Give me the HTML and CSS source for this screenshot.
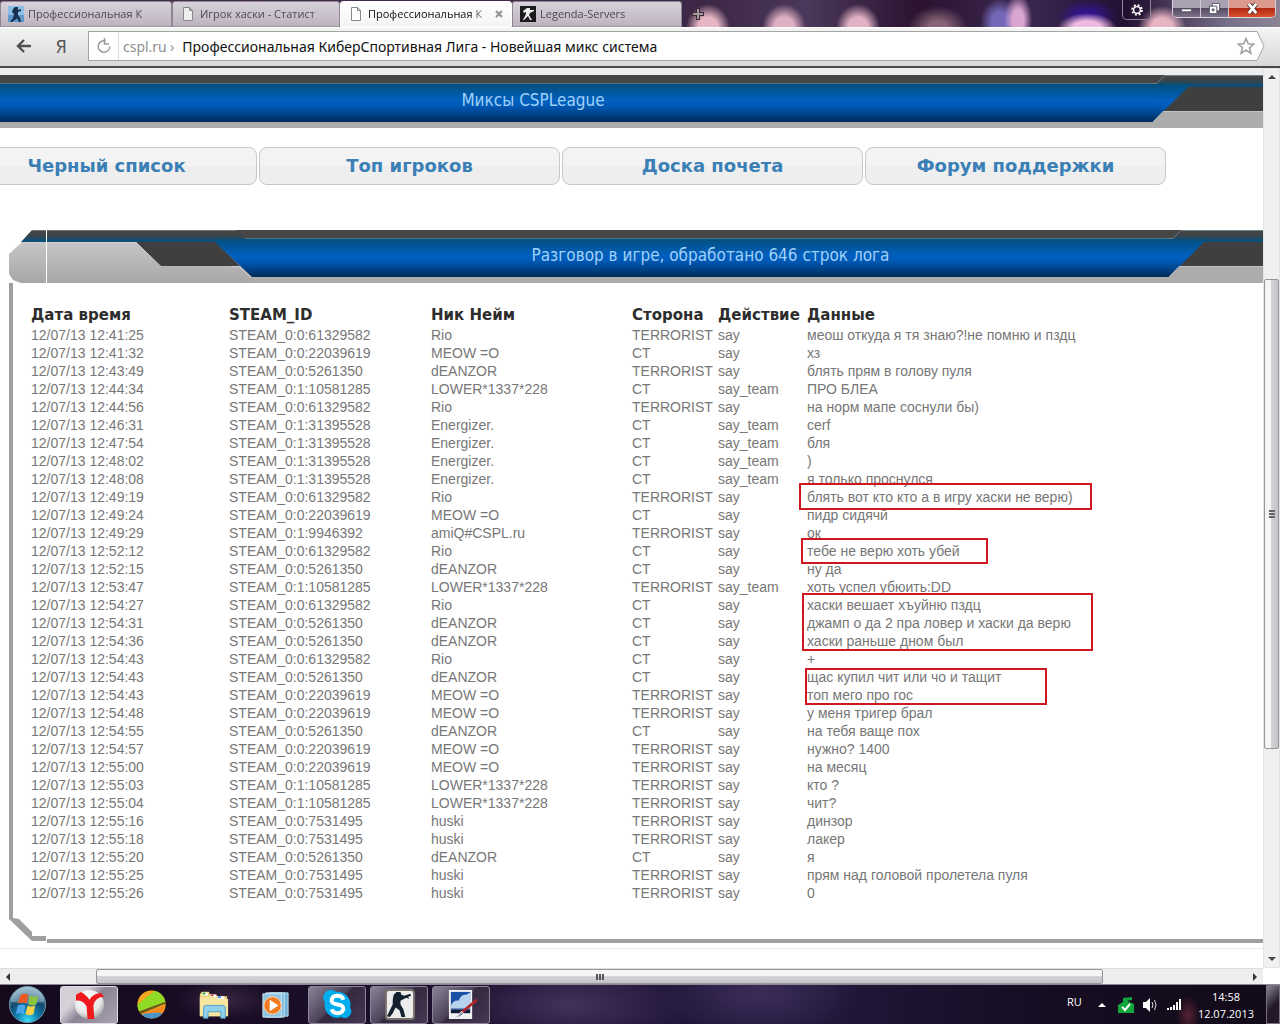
FILE: index.html
```html
<!DOCTYPE html>
<html lang="ru">
<head>
<meta charset="utf-8">
<title>Профессиональная КиберСпортивная Лига</title>
<link rel="stylesheet" href="styles.css">
</head>
<body>
<header class="titlebar">
  <nav class="tabs">
    <a class="tab" href="#"><svg class="fav" viewBox="0 0 16 16"><rect width="16" height="16" fill="#8dbfe6"/><path d="M0 9h16v7H0z" fill="#5e98cc"/><path d="M7 1h3v3l3-1v2l-3 1v3l2 3 1 4h-2l-2-4-2 2-3 2H2l3-4 1-4-2-2 1-3z" fill="#173250"/></svg><span class="tab-text">Профессиональная К</span></a>
    <a class="tab" href="#"><svg class="fav" viewBox="0 0 16 16"><path d="M3.500 1.500h6l3 3v10h-9zM9.500 1.500v3h3" fill="#eee" stroke="#888"/></svg><span class="tab-text">Игрок хаски - Статист</span></a>
    <a class="tab active" href="#"><svg class="fav" viewBox="0 0 16 16"><path d="M3.500 1.500h6l3 3v10h-9zM9.500 1.500v3h3" fill="#fff" stroke="#888"/></svg><span class="tab-text">Профессиональная К</span><svg class="close" viewBox="0 0 8 8"><path d="M1 1l6 6M7 1L1 7" stroke="#909090" stroke-width="2"/></svg></a>
    <a class="tab" href="#"><svg class="fav" viewBox="0 0 16 16"><rect width="16" height="16" fill="#1d1a1d"/><path d="M7 2h3v2l4 0v1l-4 2-1 2 3 5h-2L8 10l-4 4H3l3-6V6L4 7 3 5z" fill="#eee"/></svg><span class="tab-text">Legenda-Servers</span></a>
  </nav>
  <button class="plus" aria-label="Новая вкладка"><svg viewBox="0 0 12 12"><path d="M6 0v12M0 6h12" stroke="#3b2838" stroke-width="4"/><path d="M6 1v10M1 6h10" stroke="#a8969e" stroke-width="2"/></svg></button>
  <button class="gear" aria-label="Настройки"><svg viewBox="0 0 16 16"><circle cx="8" cy="8" r="5.500" fill="none" stroke="#fff" stroke-width="2.400" stroke-dasharray="2.160 2.160"/><circle cx="8" cy="8" r="3.800" fill="none" stroke="#fff" stroke-width="1.600"/></svg></button>
  <div class="win">
    <button class="w-min" aria-label="Свернуть"><svg viewBox="0 0 14 14"><path d="M1.500 7.500h11v3h-11z" fill="#fff" stroke="#556"/></svg></button>
    <button class="w-max" aria-label="Развернуть"><svg viewBox="0 0 14 14"><path d="M4.500 1.500h8v8h-8z" fill="#fff" stroke="#556"/><path d="M1.500 4.500h8v8h-8z" fill="#fff" stroke="#556"/><path d="M4.500 7.500h2v2h-2z" fill="#889" stroke="#556"/></svg></button>
    <button class="w-close" aria-label="Закрыть"><svg viewBox="0 0 14 14"><path d="M3 2l8 10M11 2L3 12" stroke="#533" stroke-width="5"/><path d="M3 2l8 10M11 2L3 12" stroke="#fff" stroke-width="3"/></svg></button>
  </div>
</header>

<div class="toolbar">
  <button class="back" aria-label="Назад"><svg viewBox="0 0 16 14"><path d="M15 7H2M8 1L2 7l6 6" fill="none" stroke="#505050" stroke-width="2.400"/></svg></button>
  <button class="ya">Я</button>
  <div class="address">
    <svg class="addr-bg" viewBox="0 0 10 30" preserveAspectRatio="none"><path d="M0 .5h2l7 14.500-7 14.500H0z" fill="#fff"/><path d="M0 .5h2l7 14.500-7 14.500H0" fill="none" stroke="#a5a5a5"/></svg>
    <button class="reload" aria-label="Обновить"><svg viewBox="0 0 16 16"><path d="M13.800 8.500a5.800 5.800 0 1 1-4.300-5.600" fill="none" stroke="#999" stroke-width="1.500"/><path d="M8.500 0v6h4.500" fill="none" stroke="#999" stroke-width="1.500"/></svg></button>
    <label class="host" for="url">cspl.ru ›</label>
    <input id="url" value="Профессиональная КиберСпортивная Лига - Новейшая микс система">
    <svg class="star" viewBox="0 0 18 18"><path d="M9 1.500l2.200 5.200 5.600.4-4.300 3.600 1.400 5.500L9 13.200l-4.900 3 1.400-5.500L1.200 7.100l5.600-.4z" fill="none" stroke="#a0a0a0" stroke-width="1.600"/></svg>
  </div>
</div>

<div class="viewport">
  <main class="page">
    <div class="bar bar-top">
      <h2 class="bar-mid">Миксы CSPLeague</h2>
      <svg class="bar-right" viewBox="0 0 110 53" preserveAspectRatio="xMinYMin slice"><use href="#rightcap"/></svg>
    </div>
    <nav class="menu">
      <a href="#">Черный список</a><a href="#">Топ игроков</a><a href="#">Доска почета</a><a href="#">Форум поддержки</a>
    </nav>
    <section class="panel">
      <div class="bar">
        <svg class="bar-left" viewBox="0 0 243 53">
          <defs>
            <linearGradient id="blue" x1="0" y1="9" x2="0" y2="47" gradientUnits="userSpaceOnUse"><stop offset="0" stop-color="#044f7c"/><stop offset=".45" stop-color="#0060c0"/><stop offset=".6" stop-color="#0058b4"/><stop offset="1" stop-color="#012b59"/></linearGradient>
            <linearGradient id="grey" x1="0" y1="12" x2="0" y2="53" gradientUnits="userSpaceOnUse"><stop offset="0" stop-color="#c6c6c6"/><stop offset="1" stop-color="#a7a7a7"/></linearGradient>
            <linearGradient id="lid" x1="0" y1="0" x2="0" y2="12" gradientUnits="userSpaceOnUse"><stop offset="0" stop-color="#454545"/><stop offset=".4" stop-color="#3e4346"/><stop offset="1" stop-color="#05507f"/></linearGradient>
            <g id="rightcap"><path d="M0 0h110v12H0z" fill="url(#lid)"/><path d="M35 12h75v24H0z" fill="#3f3f3f"/><path d="M0 36h110v17H0z" fill="#acacac"/><path d="M0 9h38L0 47z" fill="url(#blue)"/><path d="M0 0h12L4 8H0z" fill="#464646"/><path d="M0 8.500h4L12 .5h98" fill="none" stroke="#708088"/><path d="M0 47l10-10.500h100" fill="none" stroke="#c4c4c4"/></g>
          </defs>
          <path d="M13 12L0 24v20l4 6 8 3h231V12z" fill="url(#grey)"/>
          <path d="M23 0h220v12H12z" fill="url(#lid)"/>
          <path d="M23 .5h205" stroke="#707274"/>
          <path d="M127 12h80l24 24h-80z" fill="#3f3f3f"/>
          <path d="M206 12l5-3h32v38z" fill="url(#blue)"/>
          <path d="M227 0h16v9h-7z" fill="#464646"/>
          <path d="M236 8.500h7" stroke="#477488"/>
          <path d="M12 12.500h115l25 24M222 36.500h8l12 11" fill="none" stroke="#cfcfcf"/>
          <path d="M37.500 0v53" stroke="#fff"/>
        </svg>
        <h2 class="bar-mid">Разговор в игре, обработано 646 строк лога</h2>
        <svg class="bar-right bar-right-short" viewBox="0 0 110 53" preserveAspectRatio="xMinYMin slice"><use href="#rightcap"/></svg>
      </div>
      <div class="panel-body">
        <div class="log-wrap">
        <table class="log">
          <colgroup><col class="c-date"><col class="c-steam"><col class="c-nick"><col class="c-side"><col class="c-act"><col></colgroup>
          <thead><tr><th>Дата время</th><th>STEAM_ID</th><th>Ник Нейм</th><th>Сторона</th><th>Действие</th><th>Данные</th></tr></thead>
          <tbody>
          <tr><td>12/07/13 12:41:25</td><td>STEAM_0:0:61329582</td><td>Rio</td><td>TERRORIST</td><td>say</td><td>меош откуда я тя знаю?!не помню и пздц</td></tr>
          <tr><td>12/07/13 12:41:32</td><td>STEAM_0:0:22039619</td><td>MEOW =O</td><td>CT</td><td>say</td><td>хз</td></tr>
          <tr><td>12/07/13 12:43:49</td><td>STEAM_0:0:5261350</td><td>dEANZOR</td><td>TERRORIST</td><td>say</td><td>блять прям в голову пуля</td></tr>
          <tr><td>12/07/13 12:44:34</td><td>STEAM_0:1:10581285</td><td>LOWER*1337*228</td><td>CT</td><td>say_team</td><td>ПРО БЛЕА</td></tr>
          <tr><td>12/07/13 12:44:56</td><td>STEAM_0:0:61329582</td><td>Rio</td><td>TERRORIST</td><td>say</td><td>на норм мапе соснули бы)</td></tr>
          <tr><td>12/07/13 12:46:31</td><td>STEAM_0:1:31395528</td><td>Energizer.</td><td>CT</td><td>say_team</td><td>cerf</td></tr>
          <tr><td>12/07/13 12:47:54</td><td>STEAM_0:1:31395528</td><td>Energizer.</td><td>CT</td><td>say_team</td><td>бля</td></tr>
          <tr><td>12/07/13 12:48:02</td><td>STEAM_0:1:31395528</td><td>Energizer.</td><td>CT</td><td>say_team</td><td>)</td></tr>
          <tr><td>12/07/13 12:48:08</td><td>STEAM_0:1:31395528</td><td>Energizer.</td><td>CT</td><td>say_team</td><td>я только проснулся</td></tr>
          <tr><td>12/07/13 12:49:19</td><td>STEAM_0:0:61329582</td><td>Rio</td><td>TERRORIST</td><td>say</td><td>блять вот кто кто а в игру хаски не верю)</td></tr>
          <tr><td>12/07/13 12:49:24</td><td>STEAM_0:0:22039619</td><td>MEOW =O</td><td>CT</td><td>say</td><td>пидр сидячй</td></tr>
          <tr><td>12/07/13 12:49:29</td><td>STEAM_0:1:9946392</td><td>amiQ#CSPL.ru</td><td>TERRORIST</td><td>say</td><td>ок</td></tr>
          <tr><td>12/07/13 12:52:12</td><td>STEAM_0:0:61329582</td><td>Rio</td><td>CT</td><td>say</td><td>тебе не верю хоть убей</td></tr>
          <tr><td>12/07/13 12:52:15</td><td>STEAM_0:0:5261350</td><td>dEANZOR</td><td>CT</td><td>say</td><td>ну да</td></tr>
          <tr><td>12/07/13 12:53:47</td><td>STEAM_0:1:10581285</td><td>LOWER*1337*228</td><td>TERRORIST</td><td>say_team</td><td>хоть успел убюить:DD</td></tr>
          <tr><td>12/07/13 12:54:27</td><td>STEAM_0:0:61329582</td><td>Rio</td><td>CT</td><td>say</td><td>хаски вешает хъуйню пздц</td></tr>
          <tr><td>12/07/13 12:54:31</td><td>STEAM_0:0:5261350</td><td>dEANZOR</td><td>CT</td><td>say</td><td>джамп о да 2 пра ловер и хаски да верю</td></tr>
          <tr><td>12/07/13 12:54:36</td><td>STEAM_0:0:5261350</td><td>dEANZOR</td><td>CT</td><td>say</td><td>хаски раньше дном был</td></tr>
          <tr><td>12/07/13 12:54:43</td><td>STEAM_0:0:61329582</td><td>Rio</td><td>CT</td><td>say</td><td>+</td></tr>
          <tr><td>12/07/13 12:54:43</td><td>STEAM_0:0:5261350</td><td>dEANZOR</td><td>CT</td><td>say</td><td>щас купил чит или чо и тащит</td></tr>
          <tr><td>12/07/13 12:54:43</td><td>STEAM_0:0:22039619</td><td>MEOW =O</td><td>TERRORIST</td><td>say</td><td>топ мего про гос</td></tr>
          <tr><td>12/07/13 12:54:48</td><td>STEAM_0:0:22039619</td><td>MEOW =O</td><td>TERRORIST</td><td>say</td><td>у меня тригер брал</td></tr>
          <tr><td>12/07/13 12:54:55</td><td>STEAM_0:0:5261350</td><td>dEANZOR</td><td>CT</td><td>say</td><td>на тебя ваще пох</td></tr>
          <tr><td>12/07/13 12:54:57</td><td>STEAM_0:0:22039619</td><td>MEOW =O</td><td>TERRORIST</td><td>say</td><td>нужно? 1400</td></tr>
          <tr><td>12/07/13 12:55:00</td><td>STEAM_0:0:22039619</td><td>MEOW =O</td><td>TERRORIST</td><td>say</td><td>на месяц</td></tr>
          <tr><td>12/07/13 12:55:03</td><td>STEAM_0:1:10581285</td><td>LOWER*1337*228</td><td>TERRORIST</td><td>say</td><td>кто ?</td></tr>
          <tr><td>12/07/13 12:55:04</td><td>STEAM_0:1:10581285</td><td>LOWER*1337*228</td><td>TERRORIST</td><td>say</td><td>чит?</td></tr>
          <tr><td>12/07/13 12:55:16</td><td>STEAM_0:0:7531495</td><td>huski</td><td>TERRORIST</td><td>say</td><td>динзор</td></tr>
          <tr><td>12/07/13 12:55:18</td><td>STEAM_0:0:7531495</td><td>huski</td><td>TERRORIST</td><td>say</td><td>лакер</td></tr>
          <tr><td>12/07/13 12:55:20</td><td>STEAM_0:0:5261350</td><td>dEANZOR</td><td>CT</td><td>say</td><td>я</td></tr>
          <tr><td>12/07/13 12:55:25</td><td>STEAM_0:0:7531495</td><td>huski</td><td>TERRORIST</td><td>say</td><td>прям над головой пролетела пуля</td></tr>
          <tr><td>12/07/13 12:55:26</td><td>STEAM_0:0:7531495</td><td>huski</td><td>TERRORIST</td><td>say</td><td>0</td></tr>
          </tbody>
        </table>
        <div class="mark mark-a"></div><div class="mark mark-b"></div><div class="mark mark-c"></div><div class="mark mark-d"></div>
        </div>
      </div>
      <div class="panel-foot">
        <svg class="corner" viewBox="0 0 38 25"><path d="M0 0h4l6 1 13 13v4h14v5H23L0 1z" fill="#9f9f9f"/></svg>
        <div class="foot-line"></div>
      </div>
    </section>
    <hr class="page-end">
  </main>
  <div class="vscroll"><svg viewBox="0 0 8 4"><path d="M0 4l4-4 4 4z" fill="#444"/></svg><div class="vthumb"><i></i><i></i><i></i></div><svg viewBox="0 0 8 4"><path d="M0 0l4 4 4-4z" fill="#444"/></svg></div>
  <div class="hscroll"><svg viewBox="0 0 4 8"><path d="M4 0L0 4l4 4z" fill="#333"/></svg><div class="hthumb"><i></i><i></i><i></i></div><svg viewBox="0 0 4 8"><path d="M0 0l4 4-4 4z" fill="#333"/></svg></div>
</div>

<footer class="taskbar">
  <button class="start" aria-label="Пуск"><svg viewBox="0 0 40 40"><defs><radialGradient id="orb" cx=".5" cy=".95" r=".9"><stop offset="0" stop-color="#3de0ff"/><stop offset=".35" stop-color="#0f7fae"/><stop offset=".65" stop-color="#14496c"/><stop offset="1" stop-color="#7fa7ba"/></radialGradient></defs><circle cx="20" cy="20" r="18.500" fill="url(#orb)" stroke="#6f9db2"/><path d="M3 17a17 15 0 0 1 34 0q-17 4-34 0z" fill="#cfe4ef" opacity=".4"/><path d="M13 10q4-2 8 0l-2 9q-4-2-9 0z" fill="#ea5b24"/><path d="M22 11q5 2 9 0l-2 9q-4 2-8 0z" fill="#8cc63e"/><path d="M10 21q4-2 8 0l-2 9q-4-2-8 0z" fill="#48a7e8"/><path d="M20 21q4 2 8 0l-2 9q-4 2-8 0z" fill="#fbd148"/></svg></button>
  <button class="task on" aria-label="Яндекс"><svg viewBox="0 0 32 32"><defs><radialGradient id="ball" cx=".4" cy=".3" r=".7"><stop offset="0" stop-color="#fff"/><stop offset=".7" stop-color="#e8e8ea"/><stop offset="1" stop-color="#aaa"/></radialGradient></defs><circle cx="16" cy="16" r="15" fill="url(#ball)"/><path d="M2 6l5-3q6 3 9 8 4-7 12-7l3 4q-9 0-11 9l1 14h-7l-1-13Q9 11 2 12z" fill="#ef1a1e"/></svg></button>
  <button class="task" aria-label="Браузер"><svg viewBox="0 0 32 32"><defs><clipPath id="ballclip"><circle cx="16" cy="16" r="14.500"/></clipPath></defs><g clip-path="url(#ballclip)"><path d="M0 0h32v32H0z" fill="#f7a61f"/><path d="M0 17L22 0h10v13L0 24z" fill="#8edc25"/><path d="M1 24l30-11v2L4 26z" fill="#6b5a18"/><path d="M8 25l24-9v8l-20 5z" fill="#f08a1c"/><path d="M0 28q16-6 32-2v6H0z" fill="#4a94c8"/></g></svg></button>
  <button class="task" aria-label="Проводник"><svg viewBox="0 0 34 32"><path d="M2 5l2-3h8l1 3h7l1 2h11v22H2z" fill="#ecd078"/><path d="M4 3h7v3H4zM13 5h7v3h-7zM21 7h8v3h-8z" fill="#fff"/><path d="M5 3h3v2H5z" fill="#1aa53a"/><path d="M14 5h3v2h-3z" fill="#d6452a"/><path d="M22 7h3v2h-3z" fill="#2f7fd6"/><path d="M2 8h17l2 2h12v19H2z" fill="#f6e6a0"/><path d="M6 31V20q0-3 3-3h18q3 0 3 3v11h-5v-7H11v7z" fill="#8fd0ea" stroke="#4f9cc4"/></svg></button>
  <button class="task" aria-label="Проигрыватель"><svg viewBox="0 0 32 32"><path d="M10 4h19v24H10z" fill="#6fb0d4" stroke="#b9def0"/><path d="M6 4h19v25H6z" fill="#7fbadb" stroke="#c9e6f4"/><path d="M3 5h19v24H3z" fill="#8cc3e0" stroke="#cfe8f5"/><circle cx="13" cy="17" r="9" fill="#f07a22" stroke="#ffd9b5"/><path d="M10 11l9 6-9 6z" fill="#fff"/></svg></button>
  <button class="task open" aria-label="Skype"><svg viewBox="0 0 32 32"><path d="M9 1q4 0 6 2a13 13 0 0 1 14 16q2 3 1 6a7 7 0 0 1-10 4A13 13 0 0 1 3 14 8 8 0 0 1 9 1z" fill="#00aeef"/><path d="M22 11q-1-4-6-4t-6 4 6 5 6 5-6 4-6-4" fill="none" stroke="#fff" stroke-width="4"/></svg></button>
  <button class="task open" aria-label="Counter-Strike"><svg viewBox="0 0 32 32"><rect x="2" y="1" width="29" height="30" rx="3" fill="#ececec" stroke="#77706c" stroke-width="2"/><path d="M13 3h4l1 3 3 1 6-2 1 2-3 1 1 2-3-1-4 2-2 1v4l3 5 2 8h-4l-2-7-4-3-3 6-3 4-3-1 3-6 3-6v-5l1-5z" fill="#14202e"/></svg></button>
  <button class="task open" aria-label="Paint"><svg viewBox="0 0 32 32"><path d="M3 1h24v30H3z" fill="#f1f1f4"/><path d="M5 3h20v18H5z" fill="#1a4fa6"/><path d="M5 17q3-6 8-5 3-7 8-6 4-3 4-1v15H5z" fill="#b7d2ee"/><path d="M5 21h20v4H5z" fill="#0d1c3c"/><path d="M31 10l2 2-17 14-3-1z" fill="#b3262b"/><path d="M16 23l2 2q-3 5-9 4 4-1 7-6z" fill="#889" stroke="#eee"/></svg></button>
  <div class="tray">
    <span class="lang">RU</span>
    <svg class="t-arrow" viewBox="0 0 8 4"><path d="M0 4l4-4 4 4z" fill="#fff"/></svg>
    <svg class="t-ic" viewBox="0 0 16 16"><path d="M0 8l5-3V1l9-1v3L9 4l7 3v9H0z" fill="#12a63c"/><path d="M4 10l3 3 5-6" fill="none" stroke="#fff" stroke-width="2"/></svg>
    <svg class="t-ic" viewBox="0 0 16 16"><path d="M1 5h3l4-4v14l-4-4H1z" fill="#fff"/><path d="M10 5q2 3 0 6M12.500 3q3 5 0 10" fill="none" stroke="#ddd"/></svg>
    <svg class="t-ic t-sig" viewBox="0 0 16 16"><path d="M1 11h2v2H1zM4 10h2v3H4zM7 8h2v5H7zM10 5h2v8h-2zM13 2h2v11h-2z" fill="#fff"/></svg>
    <time class="clock"><span>14:58</span><span>12.07.2013</span></time>
    <button class="peek" aria-label="Рабочий стол"></button>
  </div>
</footer>
</body>
</html>
```
FILE: styles.css
```css
* { box-sizing: border-box; }
body { margin: 0; min-height: 100vh; display: flex; flex-direction: column; background: #fff; font-family: "Open Sans", "Noto Sans", sans-serif; font-size: 11px; overflow-x: hidden; }
button { border: 0; padding: 0; background: none; font: inherit; display: flex; align-items: center; justify-content: center; }
svg { display: block; flex: none; }
a { text-decoration: none; }

.titlebar {
  height: 27px; display: flex; align-items: flex-start; padding-right: 4px;
  background:
    radial-gradient(ellipse 22px 24px at 708px 28px, #e6b6c4 45%, transparent),
    radial-gradient(ellipse 22px 24px at 784px 28px, #dfb0c2 45%, transparent),
    radial-gradient(ellipse 22px 24px at 858px 28px, #e2b2c4 45%, transparent),
    radial-gradient(ellipse 30px 22px at 938px 28px, #876476 30%, transparent),
    radial-gradient(ellipse 14px 26px at 1018px 20px, #dba6d2 40%, transparent),
    radial-gradient(ellipse 20px 24px at 1000px 22px, #7468b8 40%, transparent),
    radial-gradient(ellipse 30px 16px at 1087px 29px, #efbadf 50%, transparent),
    radial-gradient(ellipse 30px 16px at 1087px 16px, #32148a 30%, transparent),
    radial-gradient(ellipse 24px 22px at 1162px 28px, #e8b4c2 45%, transparent),
    linear-gradient(90deg, #45304c 0, #3d2746 55%, #4b385a 63%, #2a1230 72%, #3c2850 80%, #241033 88%, #77708a 96%, #8c8494 100%);
}
.tabs { display: flex; height: 27px; padding-top: 1px; }
.tab { width: 170px; display: flex; align-items: center; gap: 4px; padding: 0 8px 1px 7px; color: #4f4852; background: linear-gradient(#d8d2da, #bcb3be); border: 1px solid #8d8592; border-bottom-color: #999; border-radius: 3px 3px 0 0; }
.tab:nth-child(odd) { width: 172px; }
.tab:nth-child(2) { width: 168px; }
.tab.active { color: #111; background: linear-gradient(#fff, #f4f4f4); border-color: #fff; }
.fav { width: 16px; height: 16px; }
.tab-text { flex: 1; min-width: 0; white-space: nowrap; -webkit-mask-image: linear-gradient(90deg, #000 84%, transparent); mask-image: linear-gradient(90deg, #000 84%, transparent); }
.close { width: 8px; height: 8px; }
.plus { margin: 8px auto 0 10px; }
.plus svg { width: 12px; height: 12px; }
.gear { width: 29px; height: 20px; border: 1px solid #8f8496; border-top: 0; border-radius: 0 0 5px 5px; background: rgba(30, 15, 40, .35); margin-right: 21px; }
.gear svg { width: 14px; height: 14px; }
.win { display: flex; height: 18px; border: 1px solid #ddd3e0; border-top: 0; border-radius: 0 0 5px 5px; overflow: hidden; }
.win svg { width: 13px; height: 13px; }
.w-min, .w-max { width: 28px; border-right: 1px solid #d0c8d4; background: linear-gradient(#a9a0b2 45%, #554a62 50%, #7c738a); }
.w-close { width: 46px; background: linear-gradient(#dc9a8c 45%, #b52a12 50%, #d8512c); }

.toolbar { height: 41px; display: flex; align-items: center; padding: 0 16px 2px; background: linear-gradient(#f4f4f4, #d8d8d8); border-top: 1px solid #fff; border-bottom: 2px solid #484848; }
.back svg { width: 16px; height: 14px; }
.ya { margin-left: 23px; width: 12px; color: #555; font: 18px "DejaVu Sans Condensed", "DejaVu Sans", sans-serif; }
.address { position: relative; flex: 1; height: 30px; margin-left: 21px; margin-right: 9px; display: flex; align-items: center; background: #fff; border: 1px solid #a5a5a5; border-right: 0; }
.addr-bg { position: absolute; left: 100%; top: -1px; width: 10px; height: 30px; }
.reload { width: 30px; height: 28px; border-right: 1px solid #ddd; }
.reload svg { width: 16px; height: 16px; }
.host { color: #888; font-size: 14px; padding: 0 8px 0 4px; }
.address input { flex: 1; min-width: 0; border: 0; padding: 0; background: none; color: #111; font: 14px "Noto Sans", "Open Sans", sans-serif; }
.star { width: 18px; height: 18px; }

.viewport { flex: 1; display: grid; grid-template-columns: minmax(0, 1fr) 17px; grid-template-rows: 1fr 16px; }
.page { overflow: hidden; background: #fff; border-top: 7px solid #eee; }
.bar { display: flex; height: 53px; overflow: hidden; }
.bar-top { margin-left: -87px; }
.bar-left { width: 243px; height: 53px; }
.bar-mid { flex: 1; margin: 0; height: 53px; border-top: 8px solid #464646; border-bottom: 6px solid #acacac; background: linear-gradient(#477488 1px, #044f7c 1px, #0060c0 45%, #0058b4 60%, #012b59); color: #9fd0f7; font: 17px/34px "DejaVu Sans Condensed", "DejaVu Sans", sans-serif; font-stretch: condensed; text-align: center; white-space: nowrap; }
.bar-right { width: 110px; height: 53px; }
.bar-right-short { width: 94px; }
.menu { display: flex; gap: 2px; margin: 19px 97px 0 -44px; }
.menu a { flex: 1; height: 38px; border: 1px solid #c8c8c8; border-radius: 8px; background: linear-gradient(#f3f3f3 50%, #eee 50%); color: #3a7fb5; font: bold 18px/36px "DejaVu Sans", sans-serif; text-align: center; white-space: nowrap; }
.panel { margin: 45px 0 0 9px; }
.panel-body { border-left: 4px solid #9f9f9f; padding: 21px 0 16px 18px; }
.log-wrap { position: relative; }
.log { width: 100%; table-layout: fixed; border-collapse: collapse; color: #777; font: 14px/18px "Liberation Sans", Arial, sans-serif; }
.log td, .log th { padding: 0; text-align: left; white-space: nowrap; }
.log th { height: 22px; color: #2d2d2d; font: bold 15px/20px "DejaVu Sans", sans-serif; }
.c-date { width: 198px; }
.c-steam { width: 202px; }
.c-nick { width: 201px; }
.c-side { width: 86px; }
.c-act { width: 89px; }
.mark { position: absolute; border: 2px solid #cf1720; }
.mark-a { left: 768px; top: 179px; width: 293px; height: 27px; }
.mark-b { left: 770px; top: 234px; width: 187px; height: 26px; }
.mark-c { left: 771px; top: 289px; width: 291px; height: 58px; }
.mark-d { left: 774px; top: 364px; width: 242px; height: 37px; }
.panel-foot { display: flex; align-items: flex-end; }
.corner { width: 38px; height: 25px; }
.foot-line { flex: 1; height: 4px; background: #9f9f9f; }
.page-end { margin: 5px 0 18px; border: 0; border-top: 1px solid #e8e8e8; }

.vscroll { display: flex; flex-direction: column; align-items: center; padding: 6px 0; background: #f0f0f0; border: 1px solid #e4e4e4; }
.vscroll svg { width: 8px; height: 4px; }
.vthumb { flex: 1; width: 15px; margin: 200px 0 208px; display: flex; flex-direction: column; justify-content: center; align-items: center; gap: 1px; border: 1px solid #979797; border-radius: 2px; background: linear-gradient(90deg, #f5f5f5 45%, #d4d4d8 50%, #c4c4c8); }
.vthumb i { width: 6px; height: 2px; background: #666; }
.hscroll { display: flex; align-items: center; padding: 0 6px; background: #eee; border-top: 1px solid #ddd; }
.hscroll svg { width: 4px; height: 8px; }
.hthumb { flex: 1; height: 15px; margin: 0 150px 0 86px; display: flex; justify-content: center; align-items: center; gap: 1px; border: 1px solid #979797; border-radius: 2px; background: linear-gradient(#f5f5f5 45%, #d4d4d8 50%, #c4c4c8); }
.hthumb i { width: 2px; height: 6px; background: #555; }

.taskbar {
  height: 40px; display: flex; align-items: center; gap: 4px; padding-left: 7px; border-top: 1px solid #8d8694;
  background:
    radial-gradient(ellipse 50px 20px at 225px 15px, #3a2440, transparent),
    radial-gradient(ellipse 120px 40px at 570px 20px, #43325c, transparent),
    radial-gradient(ellipse 100px 40px at 760px 10px, #3b2c58, transparent),
    radial-gradient(ellipse 12px 20px at 1188px 30px, #552332, transparent),
    linear-gradient(90deg, #140a1c, #1e1030 40%, #241a40 60%, #170d24 80%, #120a18);
}
.start { width: 40px; margin-right: 9px; }
.start svg { width: 39px; height: 39px; }
.task { width: 58px; height: 38px; border: 1px solid transparent; border-radius: 3px; }
.task svg { width: 31px; height: 31px; }
.task.on { border-color: #e0dce4; background: linear-gradient(135deg, #d5d0d8 30%, #8a8394 50%, #a8a2b0); }
.task.open { border-color: #8c8498; background: linear-gradient(135deg, #8b8496 0, #4d435a 45%, #35293f 50%, #443852); }
.tray { margin-left: auto; display: flex; align-items: center; color: #fff; }
.lang { padding-bottom: 6px; margin-right: 16px; }
.t-arrow { width: 8px; height: 4px; margin-right: 12px; }
.t-ic { width: 16px; height: 16px; margin-right: 8px; }
.t-sig { margin-right: 16px; }
.clock { display: flex; flex-direction: column; align-items: center; line-height: 17px; margin-right: 12px; }
.peek { width: 14px; height: 39px; border: 1px solid #77707e; background: linear-gradient(135deg, #8a8390, #221828 55%); }
```
